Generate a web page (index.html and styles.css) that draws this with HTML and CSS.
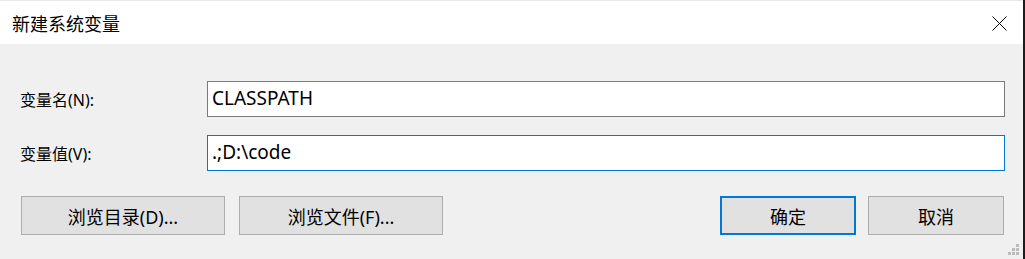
FILE: index.html
```
<!DOCTYPE html>
<html lang="zh-CN">
<head>
    <meta charset="UTF-8">
    <meta name="viewport" content="width=device-width, initial-scale=1.0">
    <title>新建系统变量</title>
    <link rel="stylesheet" href="styles.css">
</head>
<body>

<div class="window">
    <div class="titlebar">
        <span class="title">新建系统变量</span>
        <span class="close">
            <svg width="15" height="15" viewBox="0 0 15 15">
                <path d="M0.5 0.5 L14.5 14.5 M14.5 0.5 L0.5 14.5" stroke="#000" stroke-width="1" fill="none"/>
            </svg>
        </span>
    </div>

    <div class="content">
        <div class="form">
            <label class="label" for="varName">变量名(N):</label>
            <input class="field" id="varName" type="text" value="CLASSPATH">
            <label class="label" for="varValue">变量值(V):</label>
            <input class="field focused" id="varValue" type="text" value=".;D:\code">
        </div>

        <div class="actions">
            <div class="group">
                <button class="btn wide">浏览目录(D)...</button>
                <button class="btn wide">浏览文件(F)...</button>
            </div>
            <div class="group narrow-gap">
                <button class="btn small default">确定</button>
                <button class="btn small">取消</button>
            </div>
        </div>

        <svg class="grip" width="12" height="12" viewBox="0 0 12 12">
            <rect x="8" y="0" width="3" height="3" fill="#bcbcbc"/>
            <rect x="4" y="4" width="3" height="3" fill="#bcbcbc"/>
            <rect x="8" y="4" width="3" height="3" fill="#bcbcbc"/>
            <rect x="0" y="8" width="3" height="3" fill="#bcbcbc"/>
            <rect x="4" y="8" width="3" height="3" fill="#bcbcbc"/>
            <rect x="8" y="8" width="3" height="3" fill="#bcbcbc"/>
        </svg>
    </div>
</div>

</body>
</html>
```

FILE: styles.css
```
body {
    margin: 0;
    font-family: "Noto Sans", "Noto Sans CJK SC", sans-serif;
    background-color: #f0f0f0;
}
.window {
    width: 1023px;
    height: 259px;
    border-right: 2px solid #1c1c1c;
    background-color: #f0f0f0;
    display: flex;
    flex-direction: column;
}
.titlebar {
    height: 43px;
    border-top: 1px solid #e8e8e8;
    background-color: #fff;
    display: flex;
    align-items: center;
    justify-content: space-between;
    padding: 0 16px 0 12px;
}
.title {
    font-family: "Noto Sans CJK SC", sans-serif;
    font-size: 18px;
    color: #000;
}
.close {
    display: flex;
    margin-top: 2px;
}
.content {
    position: relative;
    flex: 1;
}
.form {
    display: grid;
    grid-template-columns: 187px 798px;
    row-gap: 18px;
    align-items: center;
    padding: 37px 0 0 20px;
}
.label {
    font-size: 16px;
    color: #000;
}
.field {
    box-sizing: border-box;
    height: 36px;
    margin: 0;
    padding: 0 4px 3px 4px;
    border: 1px solid #7a7a7a;
    background-color: #fff;
    font-family: "Noto Sans", "Noto Sans CJK SC", sans-serif;
    font-size: 19px;
    color: #000;
    outline: none;
}
.field.focused {
    border-color: #0078d7;
}
.actions {
    display: flex;
    justify-content: space-between;
    padding: 25px 19px 0 21px;
}
.group {
    display: flex;
    gap: 14px;
}
.group.narrow-gap {
    gap: 12px;
}
.btn {
    box-sizing: border-box;
    height: 39px;
    margin: 0;
    padding: 0;
    border: 1px solid #adadad;
    background-color: #e1e1e1;
    font-family: "Noto Sans", "Noto Sans CJK SC", sans-serif;
    font-size: 18px;
    color: #000;
}
.btn.wide {
    width: 204px;
}
.btn.small {
    width: 136px;
}
.btn.default {
    border: 2px solid #0078d7;
}
.grip {
    position: absolute;
    right: 3px;
    bottom: 3px;
}
```
